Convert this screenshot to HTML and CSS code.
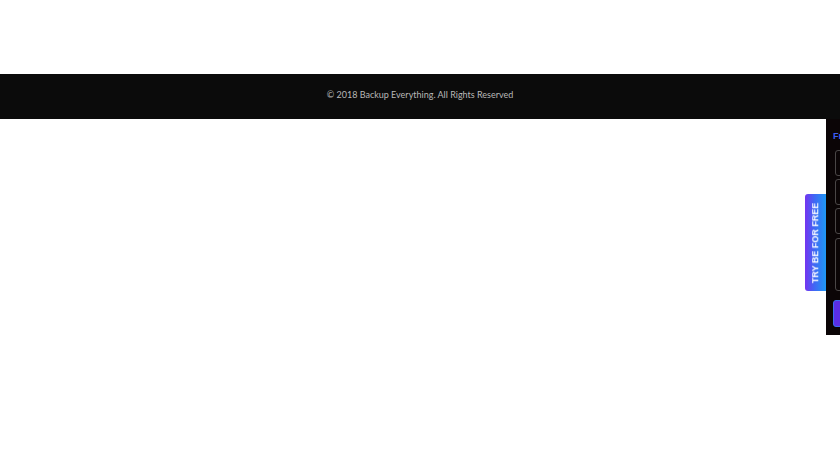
FILE: index.html
```html
<!DOCTYPE html>
<html>
<head>
<meta charset="utf-8">
<link rel="stylesheet" href="styles.css">
</head>
<body>
<div class="top"></div>
<footer class="footer">
  <p class="copy">© 2018 Backup Everything. All Rights Reserved</p>
</footer>
<aside class="trial">
  <div class="tab"><span class="tab-text">TRY BE FOR FREE</span></div>
  <div class="panel">
    <div class="panel-title">Free Trial</div>
    <div class="field"></div>
    <div class="field"></div>
    <div class="field"></div>
    <div class="field area"></div>
    <div class="submit"></div>
  </div>
</aside>
</body>
</html>
```
FILE: styles.css
```css
html, body {
  margin: 0;
  padding: 0;
  background: #ffffff;
  font-family: "Lato", "Open Sans", sans-serif;
}
.top {
  height: 74px;
}
.footer {
  height: 45px;
  background: #0b0b0b;
  display: flex;
  align-items: center;
  justify-content: center;
  box-sizing: border-box;
  padding-bottom: 4px;
}
.copy {
  margin: 0;
  color: #b8b8b8;
  font-size: 9px;
  letter-spacing: 0;
}
.trial {
  position: fixed;
  top: 119px;
  left: 826px;
  display: flex;
}
.tab {
  position: absolute;
  left: -21px;
  top: 75px;
  width: 21px;
  height: 97px;
  border-radius: 3px 0 0 3px;
  background: linear-gradient(90deg, #7434f0 0%, #3f68f4 45%, #1f98f5 100%);
  display: flex;
  align-items: center;
  justify-content: center;
}
.tab-text {
  transform: rotate(-90deg);
  white-space: nowrap;
  color: #ffffff;
  font-family: "Liberation Sans", Arial, sans-serif;
  font-weight: 700;
  font-size: 9px;
  letter-spacing: 0;
}
.panel {
  width: 240px;
  background: #0b0506;
  padding: 12px 8px 8px 7px;
  display: flex;
  flex-direction: column;
}
.panel-title {
  color: #3d5df2;
  font-weight: 700;
  font-size: 9px;
  line-height: 11px;
  margin-bottom: 8px;
  font-family: "Liberation Sans", Arial, sans-serif;
}
.field {
  height: 24px;
  margin: 0 0 3px 2px;
  border: 1px solid #4a4646;
  border-radius: 3px;
  background: #0b0506;
}
.field.area {
  height: 51px;
  margin-top: 1px;
  margin-bottom: 9px;
}
.submit {
  height: 25px;
  background: #5a2ee6;
  border: 1px solid #3a6cf2;
  border-radius: 3px;
}
```
